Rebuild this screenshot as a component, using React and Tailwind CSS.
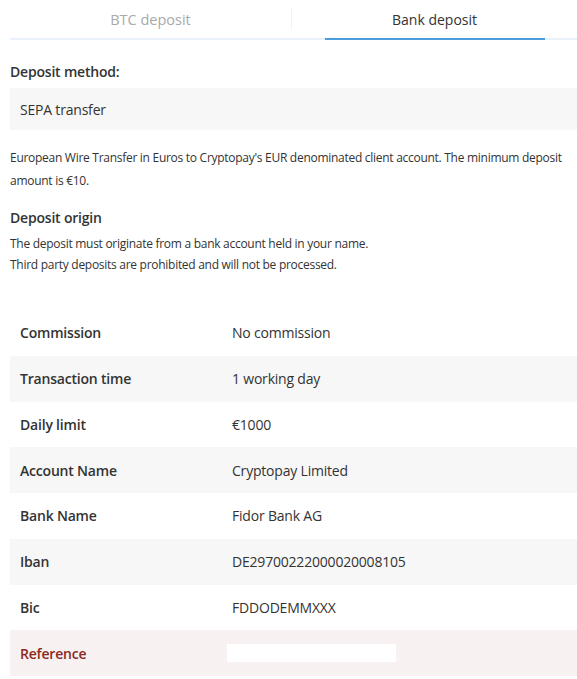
export default function App() {
  const rows = [
    ["Commission", "No commission"],
    ["Transaction time", "1 working day"],
    ["Daily limit", "€1000"],
    ["Account Name", "Cryptopay Limited"],
    ["Bank Name", "Fidor Bank AG"],
    ["Iban", "DE29700222000020008105"],
    ["Bic", "FDDODEMMXXX"],
  ];
  return (
    <div className="w-[577px] h-[679px] bg-white text-[#333] overflow-hidden" style={{ fontFamily: '"Open Sans", "Liberation Sans", sans-serif' }}>
      <div className="ml-[10px] flex h-[40px] border-b-2 border-[#e9f2fa]">
        <div className="w-[281px] flex items-center justify-center text-[14.5px] text-[#a9a9a9] pt-px">
          BTC deposit
        </div>
        <div className="w-px my-[8px] bg-[#eef4f9]"></div>
        <div className="flex-1 flex justify-center">
          <div className="w-[220px] flex items-center justify-center text-[14px] text-[#333] border-b-2 border-[#4a9ee0] -mb-[2px] pt-px">
            Bank deposit
          </div>
        </div>
      </div>
      <div className="pl-[10px]">
        <div className="mt-[22px] text-[14px] font-semibold leading-[20px] tracking-[-0.2px]">Deposit method:</div>
        <div className="mt-[6px] h-[42px] bg-[#f7f7f7] flex items-center pl-[10px] text-[14px] tracking-[-0.2px]">SEPA transfer</div>
        <p className="mt-[16px] text-[12px] leading-[23px] tracking-[-0.28px]">
          European Wire Transfer in Euros to Cryptopay's EUR denominated client account. The minimum deposit amount is €10.
        </p>
        <div className="mt-[16px] text-[14px] font-semibold leading-[20px] tracking-[-0.2px]">Deposit origin</div>
        <p className="mt-[5px] text-[12px] leading-[21px] tracking-[-0.28px]">
          The deposit must originate from a bank account held in your name.<br />
          Third party deposits are prohibited and will not be processed.
        </p>
        <div className="mt-[35px]">
          {rows.map(([k, v], i) => (
            <div key={k} className={`h-[45.75px] flex items-center text-[14px] tracking-[-0.2px] ${i % 2 === 1 ? "bg-[#f7f7f7]" : ""}`}>
              <div className="w-[222px] pl-[10px] font-semibold">{k}</div>
              <div>{v}</div>
            </div>
          ))}
          <div className="h-[45.75px] flex items-center text-[14px] tracking-[-0.2px] bg-[#f8f1f1]">
            <div className="w-[217px] pl-[10px] font-semibold text-[#8a2a1e]">Reference</div>
            <div className="w-[169px] h-[18px] bg-white"></div>
          </div>
        </div>
      </div>
    </div>
  );
}
